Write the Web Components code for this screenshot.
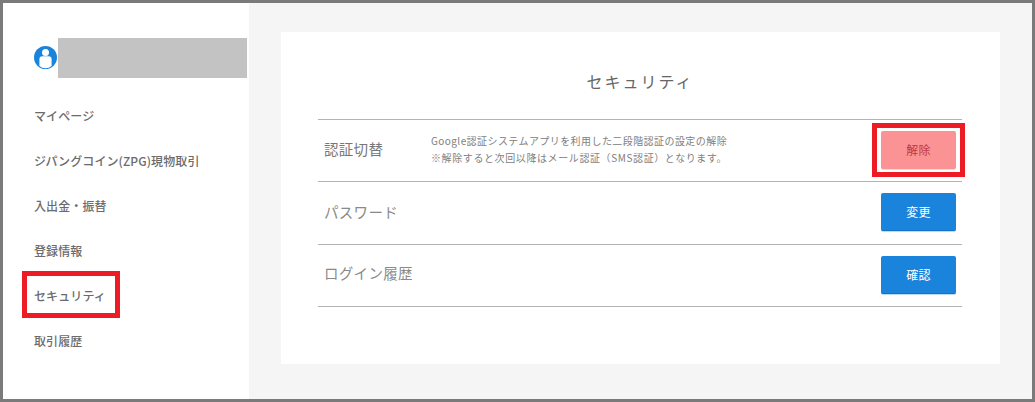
<!DOCTYPE html>
<html lang="ja"><head><meta charset="utf-8"><style>
html,body{margin:0;padding:0;width:1035px;height:402px;overflow:hidden;background:#7a7a7a}
body{font-family:"Noto Sans CJK JP","Noto Sans",sans-serif;color:#666}
</style></head><body>
<app-frame>
  <side-nav slot="side"></side-nav>
  <security-card slot="main"></security-card>
</app-frame>
<script>
const def=(name,html,init)=>customElements.define(name,class extends HTMLElement{
  constructor(){super();this.attachShadow({mode:'open'}).innerHTML=html;}
  connectedCallback(){init&&init(this);}
});
def('app-frame',`<style>
:host{display:flex;box-sizing:border-box;width:1035px;height:402px;padding:3px}
.side{width:246px;background:#fff;flex:none}
.main{flex:1;background:#f5f5f5;padding:29px 32px 35px 32px;box-sizing:border-box;display:flex}
</style><div class="side"><slot name="side"></slot></div><div class="main"><slot name="main"></slot></div>`);
def('nav-item',`<style>
:host{display:block;height:45px;line-height:45px;font-size:12px;font-weight:500;letter-spacing:.1px;color:#6b6b6b;position:relative;white-space:nowrap}
:host([boxed])::after{content:"";position:absolute;left:-12px;top:-2px;width:98px;height:47px;box-sizing:border-box;border:5px solid #ed1c24}
</style><slot></slot>`);
def('side-nav',`<style>
:host{display:block;padding:35px 0 0 31px}
.user{display:flex;align-items:center;height:40px;margin-bottom:15px}
svg{width:23px;height:23px;flex:none;margin-top:-1px}
.mask{width:189px;height:40px;background:#c3c3c3;margin-left:1px}
</style>
<div class="user"><svg viewBox="0 0 23 23"><circle cx="11.5" cy="11.5" r="11.5" fill="#1a84dc"/><circle cx="11.5" cy="6.6" r="3.5" fill="#fff"/><path d="M5.4 20v-6.8q0-3 3-3h6.2q3 0 3 3V20q-2.6 2.2-6.1 2.2T5.4 20z" fill="#fff"/></svg><div class="mask"></div></div>
<nav-item>マイページ</nav-item>
<nav-item>ジパングコイン(ZPG)現物取引</nav-item>
<nav-item>入出金・振替</nav-item>
<nav-item>登録情報</nav-item>
<nav-item boxed>セキュリティ</nav-item>
<nav-item>取引履歴</nav-item>`);
def('action-button',`<style>
:host{display:flex;align-items:center;justify-content:center;width:75px;height:38px;margin-top:-2px;box-sizing:border-box;border-radius:2px;font-size:12px;background:#1a84dc;color:#fff;box-shadow:0 1px 0 #b9dcf5;border-bottom:1px solid #1274c8;position:relative;letter-spacing:.2px}
:host([danger]){background:#fb9394;color:#c0393f;border-bottom:0;box-shadow:0 1px 0 #fdd3d3}
:host([danger])::after{content:"";position:absolute;left:-9px;top:-8px;width:93px;height:54px;box-sizing:border-box;border:5px solid #ed1c24}
</style><slot></slot>`);
def('sec-row',`<style>
:host{display:flex;align-items:center;height:var(--h,62px);box-sizing:border-box;padding:0 6px;border-bottom:1px solid #b4b4b4}
.label{font-size:14.5px;letter-spacing:.3px;color:var(--c,#777);width:107px;flex:none;margin-top:var(--lift,-4px)}
.desc{flex:1;font-size:10px;line-height:17.5px;color:#808080;margin-top:-3px;white-space:nowrap}
</style><div class="label"><slot name="label"></slot></div><div class="desc"><slot name="desc"></slot></div><slot name="action"></slot>`);
def('security-card',`<style>
:host{display:block;flex:1;background:#fff;padding:0 38px 0 37px;box-sizing:border-box}
h1{margin:0;height:88px;box-sizing:border-box;padding-top:37px;font-size:16px;line-height:24px;font-weight:400;text-align:center;letter-spacing:2px;color:#666;border-bottom:1px solid #b4b4b4}
.a{letter-spacing:.43px}.b{letter-spacing:.6px}
</style><h1>セキュリティ</h1>
<sec-row><span slot="label">認証切替</span><span slot="desc"><span class="a">Google認証システムアプリを利用した二段階認証の設定の解除</span><br><span class="b">※解除すると次回以降はメール認証（SMS認証）となります。</span></span><action-button slot="action" danger>解除</action-button></sec-row>
<sec-row style="--lift:-4px;--h:63px;--c:#8a8a8a"><span slot="label">パスワード</span><action-button slot="action">変更</action-button></sec-row>
<sec-row style="--lift:-6px;--c:#8a8a8a"><span slot="label">ログイン履歴</span><action-button slot="action">確認</action-button></sec-row>`);
</script></body></html>
